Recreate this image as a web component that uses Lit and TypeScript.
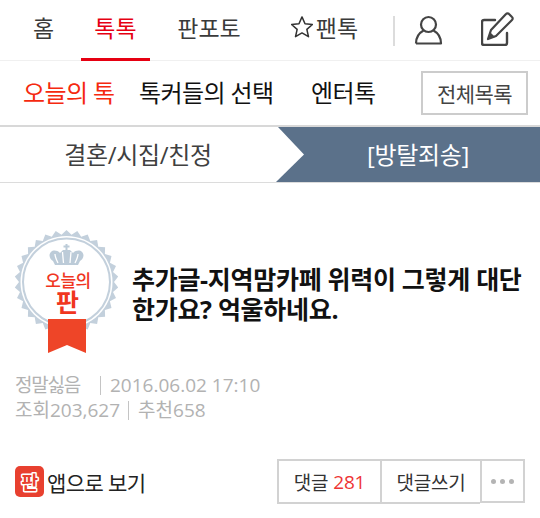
import { LitElement, html, css, svg } from "lit";
import { customElement } from "lit/decorators.js";

const teeth = () => {
  const pts: string[] = [];
  const n = 30, cx = 66.5, cy = 65, R = 52, r = 47.5;
  for (let i = 0; i < n * 2; i++) {
    const a = (Math.PI * i) / n;
    const rad = i % 2 ? r : R;
    pts.push(`${(cx + rad * Math.sin(a)).toFixed(1)},${(cy - rad * Math.cos(a)).toFixed(1)}`);
  }
  return pts.join(" ");
};

@customElement("app-root")
export class AppRoot extends LitElement {
  static styles = css`
    :host {
      display: block;
      width: 540px;
      height: 518px;
      overflow: hidden;
      background: #fff;
      font-family: "Open Sans", "Noto Sans CJK KR", sans-serif;
      color: #333;
    }
    .nav {
      display: flex;
      align-items: stretch;
      height: 61px;
      box-sizing: border-box;
      border-bottom: 1px solid #f0f0f0;
      font-size: 23px;
    }
    .tab {
      display: flex;
      align-items: center;
      justify-content: center;
      height: 54px;
      padding-bottom: 4px;
      color: #3a3a3a;
    }
    .home { width: 81px; margin-left: 3px; margin-right: -3px; }
    .talk { width: 69px; color: #e60012; border-bottom: 3px solid #e60012; }
    .pan { width: 118px; }
    .fan { width: 95px; margin-left: 9px; gap: 3px; }
    .star { width: 22px; height: 22px; }
    .sep { width: 2px; height: 30px; background: #dcdcdc; margin: 16px 0 0 21px; }
    .user { width: 30px; height: 30px; margin: 15px 0 0 19px; }
    .edit { width: 34px; height: 36px; margin: 10px 0 0 37px; }
    .sub {
      display: flex;
      align-items: center;
      height: 64px;
      padding-bottom: 4px;
      font-size: 24px;
      color: #111;
      letter-spacing: -0.6px;
      padding-left: 23px;
      box-sizing: border-box;
    }
    .sub .on { color: #f5290f; width: 116px; }
    .sub .mid { width: 172px; }
    .sub .ent { width: 110px; }
    .all {
      width: 107px;
      height: 44px;
      margin-top: 4px;
      box-sizing: border-box;
      border: 2.5px solid #cccccc;
      display: flex;
      align-items: center;
      justify-content: center;
      font-size: 21px;
      color: #444;
      letter-spacing: -0.6px;
    }
    .cat {
      display: flex;
      height: 58px;
      box-sizing: border-box;
      border-top: 2px solid #d8d8d8;
      border-bottom: 1px solid #dcdcdc;
      font-size: 24px;
    }
    .cat > div { display: flex; align-items: center; justify-content: center; letter-spacing: -0.3px; padding-bottom: 2px; }
    .cat .l { width: 276px; color: #404040; }
    .cat .arrow { width: 30px; height: 55px; display: block; flex: none; background: #5b718a; }
    .cat .r { flex: 1; background: #5b718a; color: #fff; padding-right: 10px; }
    .head {
      display: flex;
      align-items: center;
      height: 130px;
      margin-top: 39px;
    }
    .badge { width: 130px; height: 140px; flex: none; display: block; }
    .title {
      margin: 0 0 0 2px;
      font-size: 25px;
      line-height: 30px;
      font-weight: 700;
      color: #111;
      letter-spacing: -0.3px;
      width: 392px;
      padding-top: 14px;
    }
    .meta {
      margin-top: 21px;
      padding-left: 15px;
      font-size: 19px;
      line-height: 25px;
      color: #b2b2b2;
    }
    .meta .row { display: flex; align-items: center; white-space: nowrap; }
    .meta i { display: block; width: 1px; height: 19px; background: #c4c4c4; }
    .meta .a { width: 85px; letter-spacing: -1.2px; }
    .meta .b { margin-left: 9px; }
    .meta .c { margin: 0 9px 0 8px; }
    .foot {
      display: flex;
      align-items: flex-start;
      margin-top: 36px;
      padding-left: 15px;
    }
    .app { display: flex; align-items: center; gap: 3px; font-size: 21px; color: #222; height: 45px; width: 262px; letter-spacing: -0.6px; }
    .appicon { width: 29px; height: 31px; display: block; flex: none; }
    .btns { display: flex; }
    .btn {
      height: 45px;
      box-sizing: border-box;
      border: 2px solid #d2d2d2;
      display: flex;
      align-items: center;
      justify-content: center;
      font-size: 19px;
      color: #333;
      letter-spacing: -0.2px;
    }
    .btn b { font-weight: 400; color: #ee3535; margin-left: 5px; }
    .b1 { width: 103px; border-right: 0; }
    .b2 { width: 100px; border-right: 0; }
    .b3 { width: 45px; height: 44px; gap: 4px; }
    .dot { width: 5px; height: 5px; border-radius: 50%; background: #b4b4b4; }
  `;

  render() {
    return html`
      <div class="nav">
        <div class="tab home">홈</div>
        <div class="tab talk">톡톡</div>
        <div class="tab pan">판포토</div>
        <div class="tab fan">
          <svg class="star" viewBox="1 1 19 19"><path d="M10.5 1.8l2.600 5.900 6.400.6-4.800 4.300 1.400 6.300-5.600-3.300-5.600 3.300 1.400-6.300L1.500 8.300l6.400-.6z" fill="none" stroke="#333" stroke-width="1.300" stroke-linejoin="round"/></svg>
          <span>팬톡</span>
        </div>
        <div class="sep"></div>
        <svg class="user" viewBox="0 0 30 30" fill="none" stroke="#444" stroke-width="2.200">
          <circle cx="14.500" cy="9.500" r="7.500"/>
          <path d="M2 28.500h25c0-6-3-10.500-7.500-13M2 28.500c0-6 3-10.500 7.500-13" stroke-linejoin="round"/>
        </svg>
        <svg class="edit" viewBox="0 0 34 36" fill="none" stroke="#444" stroke-width="2.400">
          <path d="M14 10H3a2 2 0 0 0-2 2v21a2 2 0 0 0 2 2h21a2 2 0 0 0 2-2V23" stroke-linecap="round"/>
          <path d="M7 29l3-9L25 4a2 2 0 0 1 3 0l3 3a2 2 0 0 1 0 3L15 26z" stroke-width="2.200" stroke-linejoin="round"/>
          <path d="M7 29l2-7 5 5z" fill="#444" stroke="none"/>
        </svg>
      </div>
      <div class="sub">
        <div class="on">오늘의 톡</div>
        <div class="mid">톡커들의 선택</div>
        <div class="ent">엔터톡</div>
        <div class="all">전체목록</div>
      </div>
      <div class="cat">
        <div class="l">결혼/시집/친정</div>
        <svg class="arrow" viewBox="0 0 30 55"><path d="M0 0h2l26 27.500L0 55z" fill="#fff"/></svg>
        <div class="r">[방탈죄송]</div>
      </div>
      <div class="head">
        <svg class="badge" viewBox="0 0 130 140">
          ${svg`<polygon points=${teeth()} fill="#c3d0dc"/>
          <circle cx="66.500" cy="65" r="46" fill="#fff"/>
          <circle cx="66.500" cy="65" r="43.500" fill="none" stroke="#c3d0dc" stroke-width="2"/>
          <g fill="#bccbd8">
            <path d="M60 36c-3-3-7-3-9-1-3 3-1 7 2 9l2 4h23l2-4c3-2 5-6 2-9-2-2-6-2-9 1l-3-3h-7z"/>
            <rect x="65.500" y="27" width="2" height="6"/><rect x="63.500" y="28.500" width="6" height="2"/>
          </g>
          <path d="M55 37c0 3 1 5 3 9M62.500 35l1 11M71 35l-1 11M78 37c0 3-1 5-3 9" stroke="#fff" stroke-width="1.300" fill="none"/>
          <text x="68" y="70" text-anchor="middle" font-size="17" font-weight="500" fill="#f0361f" letter-spacing="-0.500">오늘의</text>
          <text x="67.500" y="95" text-anchor="middle" font-size="25" font-weight="700" fill="#f0361f">판</text>
          <path d="M48 102h38v34l-19-8-19 8z" fill="#ee4528"/>`}
        </svg>
        <h1 class="title">추가글-지역맘카페 위력이 그렇게 대단한가요? 억울하네요.</h1>
      </div>
      <div class="meta">
        <div class="row"><span class="a">정말싫음</span><i></i><span class="b">2016.06.02 17:10</span></div>
        <div class="row"><span>조회203,627</span><i class="c"></i><span>추천658</span></div>
      </div>
      <div class="foot">
        <div class="app">
          <svg class="appicon" viewBox="0 0 29 31">
            <rect width="29" height="31" rx="5" fill="#e8402f"/>
            <rect x="8" y="20" width="13" height="6" rx="1" fill="#fff"/>
            <text x="14.500" y="23" text-anchor="middle" font-size="18" font-weight="700" fill="#e8402f" stroke="#fff" stroke-width="3" paint-order="stroke" stroke-linejoin="round">판</text>
          </svg>
          <span>앱으로 보기</span>
        </div>
        <div class="btns">
          <div class="btn b1">댓글<b>281</b></div>
          <div class="btn b2">댓글쓰기</div>
          <div class="btn b3"><span class="dot"></span><span class="dot"></span><span class="dot"></span></div>
        </div>
      </div>
    `;
  }
}
